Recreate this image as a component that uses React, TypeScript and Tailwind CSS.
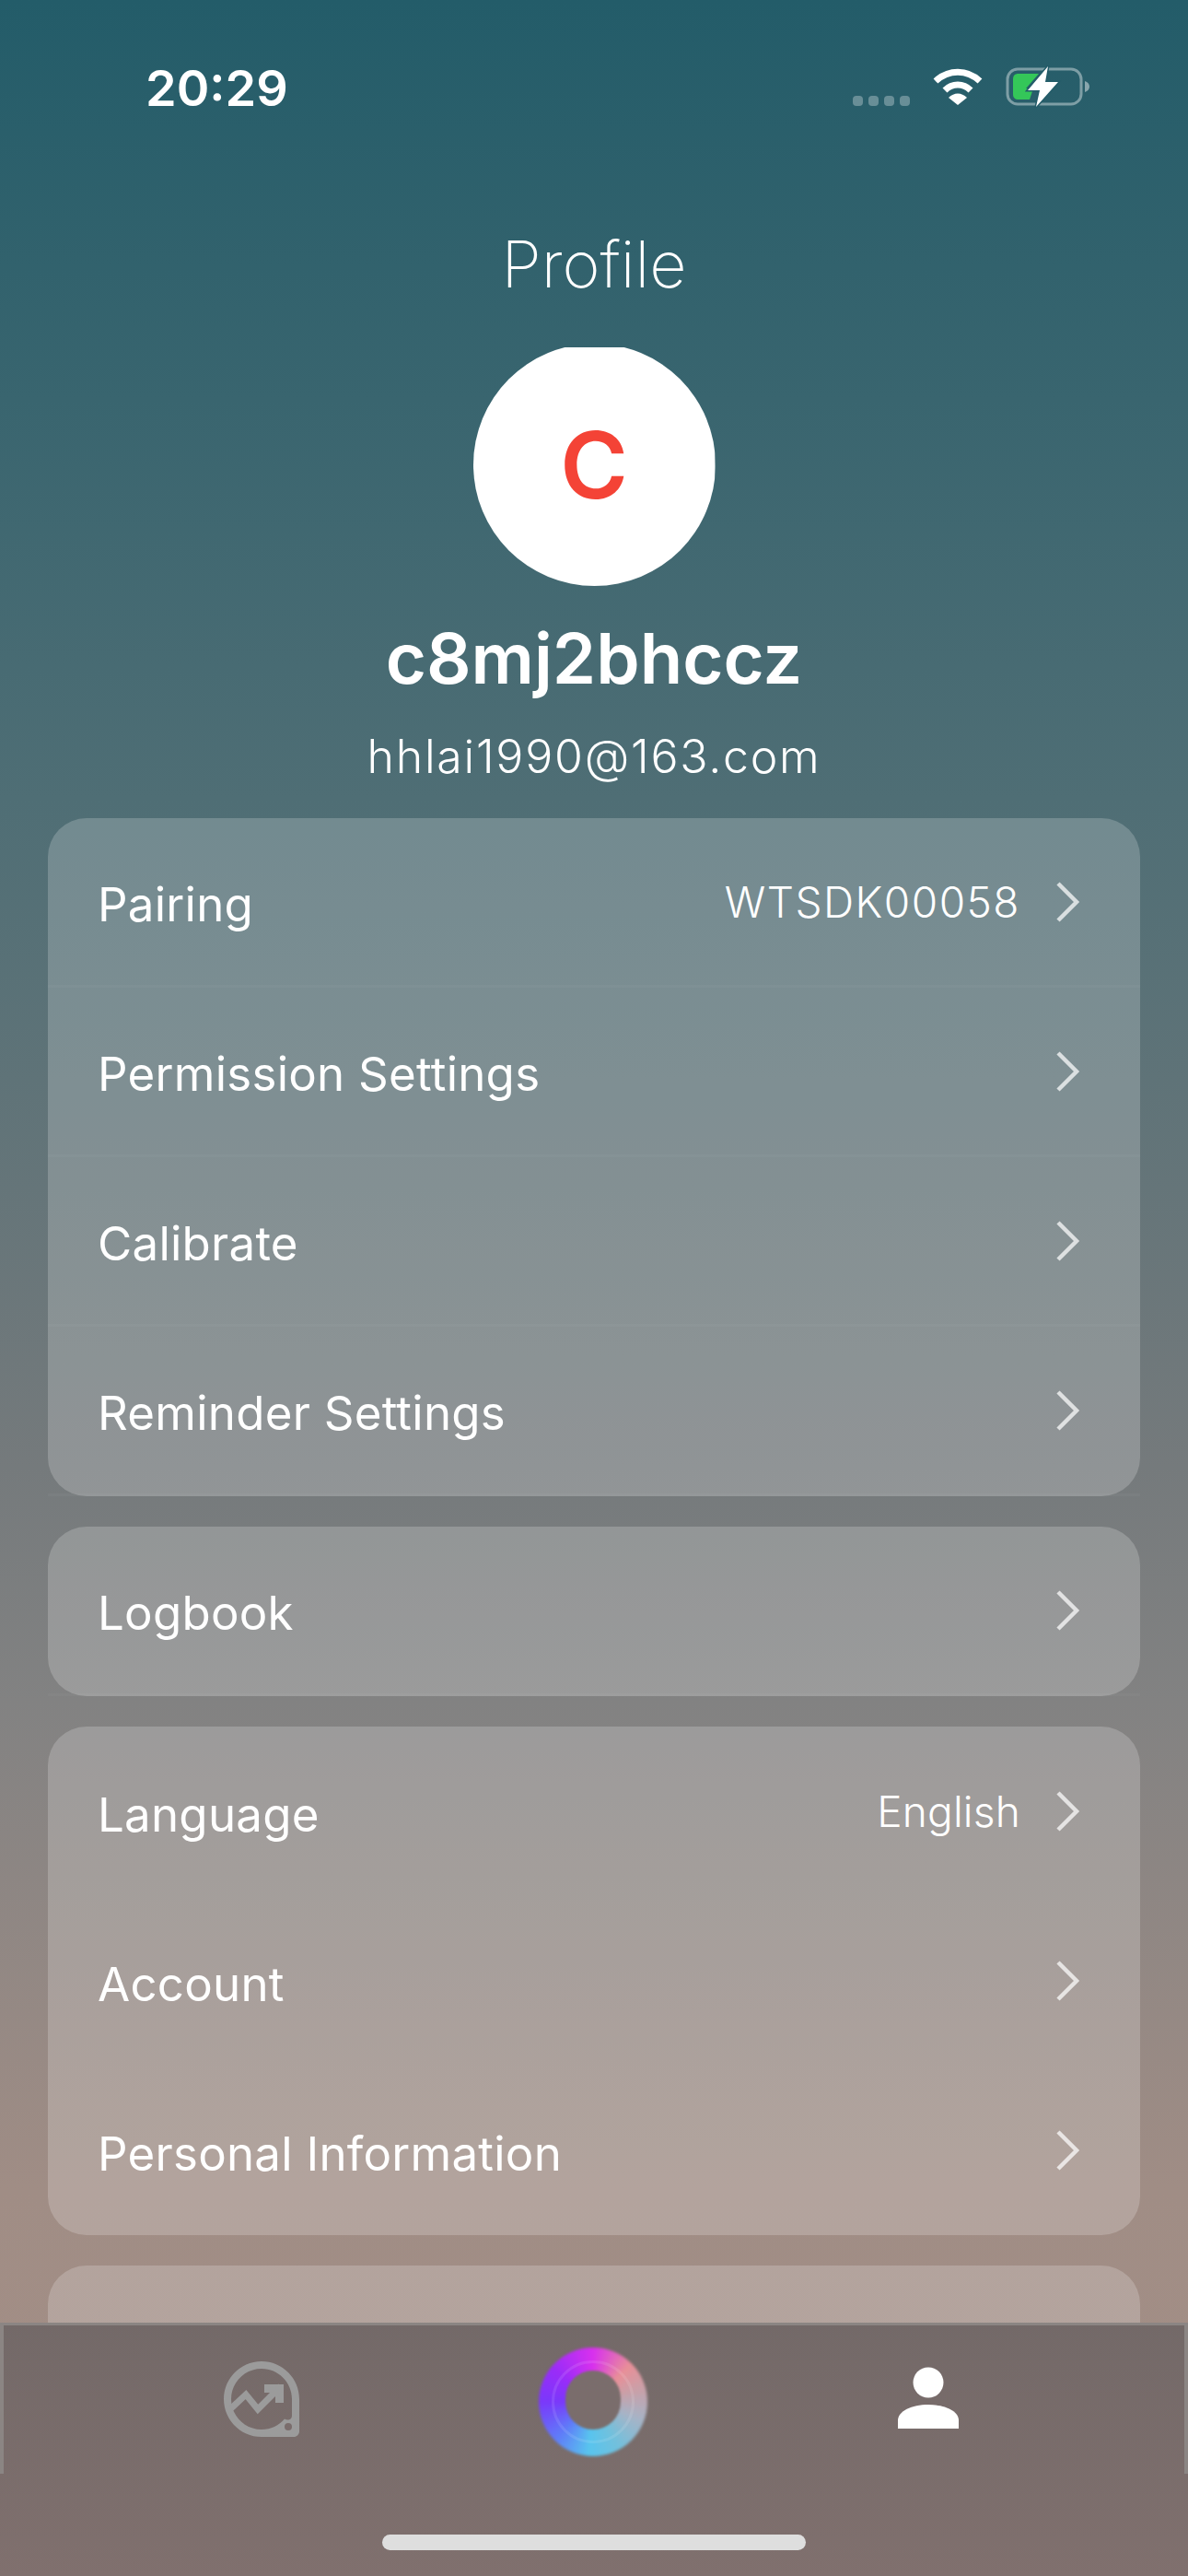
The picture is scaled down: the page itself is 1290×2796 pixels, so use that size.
import React from "react";

const font = { fontFamily: "Inter, 'Liberation Sans', sans-serif" };

function Chevron() {
  return (
    <svg width="27" height="44" viewBox="0 0 27 44" fill="none" className="shrink-0">
      <path d="M3 2 L23 22 L3 42" stroke="#fff" strokeOpacity="0.72" strokeWidth="4.5" />
    </svg>
  );
}

function Row({ label, value, wide, line }: { label: string; value?: string; wide?: boolean; line?: boolean }) {
  return (
    <div className={`h-[184px] flex items-center justify-between pl-[54px] pr-[65px] ${line ? "border-b-[3px] border-white/[.03]" : ""}`}>
      <span className="text-[51px] leading-none font-normal text-white tracking-[.25px] pt-[6px]">{label}</span>
      <div className="flex items-center gap-[38px]">
        {value && (
          <span className={`text-[46px] leading-none font-[350] text-white ${wide ? "tracking-[1.5px]" : "tracking-[.2px]"}`}>{value}</span>
        )}
        <Chevron />
      </div>
    </div>
  );
}

function Card({ children }: { children: React.ReactNode }) {
  return <div className="rounded-[42px] bg-white/20 shrink-0">{children}</div>;
}

function StatusBar() {
  return (
    <div className="h-[180px] shrink-0 flex items-start justify-between pl-[158px] pr-[106px] pt-[66px]">
      <span className="text-[54px] leading-[60px] font-semibold text-white">20:29</span>
      <div className="flex items-start mt-[7px]">
        <div className="flex gap-[6px] mt-[31px] mr-[24px]">
          <div className="w-[11px] h-[11px] rounded-[4px] bg-white/30" />
          <div className="w-[11px] h-[11px] rounded-[4px] bg-white/30" />
          <div className="w-[11px] h-[11px] rounded-[4px] bg-white/30" />
          <div className="w-[11px] h-[11px] rounded-[4px] bg-white/30" />
        </div>
        <svg width="56" height="42" viewBox="0 0 56 42" fill="none" className="mr-[24px]">
          <path d="M4 15 C18 2 38 2 52 15" stroke="#fff" strokeWidth="7" strokeLinecap="butt" />
          <path d="M14 25 C22 17 34 17 42 25" stroke="#fff" strokeWidth="7" />
          <path d="M18 33 C24 27 32 27 38 33 L28 41 Z" fill="#fff" />
        </svg>
        <svg width="92" height="46" viewBox="0 0 92 46" fill="none" className="-mt-[2px]">
          <rect x="2" y="4" width="80" height="38" rx="11" stroke="#fff" strokeOpacity="0.4" strokeWidth="3" />
          <path d="M86 17 C89 18 91 20 91 23 C91 26 89 28 86 29 Z" fill="#fff" fillOpacity="0.45" />
          <path d="M14 9 H36 L22 25 H30 L26 37 H14 C10 37 8 35 8 31 V15 C8 11 10 9 14 9 Z" fill="#34c759" />
          <path d="M46 1 L24 27 H37 L33 45 L57 18 H43 Z" fill="#fff" stroke="#235c69" strokeWidth="3" paintOrder="stroke" />
        </svg>
      </div>
    </div>
  );
}

function TabBar() {
  return (
    <div className="absolute left-0 right-0 bottom-0 h-[275px] bg-gradient-to-b from-[#736968] to-[#80706e]">
      <div className="h-[164px] border-t-[3px] border-x-[4px] border-[#8b8583] flex items-center">
        <div className="w-[238px] shrink-0" />
        <svg width="84" height="84" viewBox="0 0 84 84" fill="none" className="-mt-[2px]">
          <path
            d="M42 1 C64.6 1 83 19.4 83 42 V77 C83 80.3 80.3 83 77 83 H42 C19.4 83 1 64.6 1 42 C1 19.4 19.4 1 42 1 Z M42 9 C23.8 9 9 23.8 9 42 C9 60.2 23.8 75 42 75 C52 75 61 70.5 67 63.5 C69 65 72 65 74 63 C75 61.8 75 60.5 75 59 V42 C75 23.8 60.2 9 42 9 Z"
            fill="#9b9b9b"
            fillRule="evenodd"
          />
          <circle cx="71" cy="72" r="4" fill="#7a6d6c" />
          <path d="M9 52 L25 37 L38 53 L63 28" stroke="#9b9b9b" strokeWidth="7" />
          <path d="M45 26 H66 V46 H57 V35 H45 Z" fill="#9b9b9b" />
        </svg>
        <div className="w-[259px] shrink-0" />
        <div className="relative w-[118px] h-[118px] shrink-0 mt-[4px]">
          <div className="absolute inset-0 rounded-full blur-[1.5px] bg-[conic-gradient(from_0deg,#d830ee_0deg,#e88f98_45deg,#c9a0a8_75deg,#a7b3c6_110deg,#72c0dc_150deg,#58c4ee_185deg,#5f7cf8_225deg,#7a38fa_270deg,#9a2cf8_310deg,#d830ee_360deg)]" />
          <div className="absolute inset-[14px] rounded-full border-[3px] border-white/10" />
          <div className="absolute left-[29px] top-[25px] w-[60px] h-[64px] rounded-full bg-[#7a6d6c] blur-[1px]" />
        </div>
        <div className="w-[271px] shrink-0" />
        <svg width="68" height="68" viewBox="0 0 68 68" fill="#fff" className="-mt-[4px]">
          <circle cx="34" cy="17" r="16.5" />
          <path d="M1 67 V58 C1 48 16 41 34 41 C52 41 67 48 67 58 V67 Z" />
        </svg>
      </div>
      <div className="flex justify-center pt-[66px]">
        <div className="w-[460px] h-[17px] rounded-full bg-[#dedede]" />
      </div>
    </div>
  );
}

export default function App() {
  return (
    <div
      className="relative w-[1290px] h-[2796px] overflow-hidden flex flex-col bg-[linear-gradient(180deg,#235c69_0%,#4f6e75_31%,#757a7c_57%,#828282_66%,#a08d85_85%,#a58f86_100%)]"
      style={font}
    >
      <StatusBar />
      <h1 className="text-center text-[70px] leading-[80px] font-extralight text-white mt-[67px]">Profile</h1>
      <div className="self-center w-[263px] h-[263px] rounded-full bg-white flex items-center justify-center mt-[46px] [clip-path:inset(4px_0_0_0)]">
        <span className="text-[100px] leading-none font-semibold text-[#f44336]">C</span>
      </div>
      <div className="text-center text-[76px] leading-[90px] font-semibold text-white mt-[33px]">c8mj2bhccz</div>
      <div className="text-center text-[50px] leading-[60px] font-[350] tracking-[1.75px] text-white mt-[32px]">hhlai1990@163.com</div>
      <div className="flex flex-col gap-[33px] mx-[52px] mt-[37px]">
        <Card>
          <Row label="Pairing" value="WTSDK00058" wide line />
          <Row label="Permission Settings" line />
          <Row label="Calibrate" line />
          <Row label="Reminder Settings" line />
        </Card>
        <Card>
          <Row label="Logbook" line />
        </Card>
        <Card>
          <Row label="Language" value="English" />
          <Row label="Account" />
          <Row label="Personal Information" />
        </Card>
        <Card>
          <div className="h-[184px]" />
        </Card>
      </div>
      <TabBar />
    </div>
  );
}
